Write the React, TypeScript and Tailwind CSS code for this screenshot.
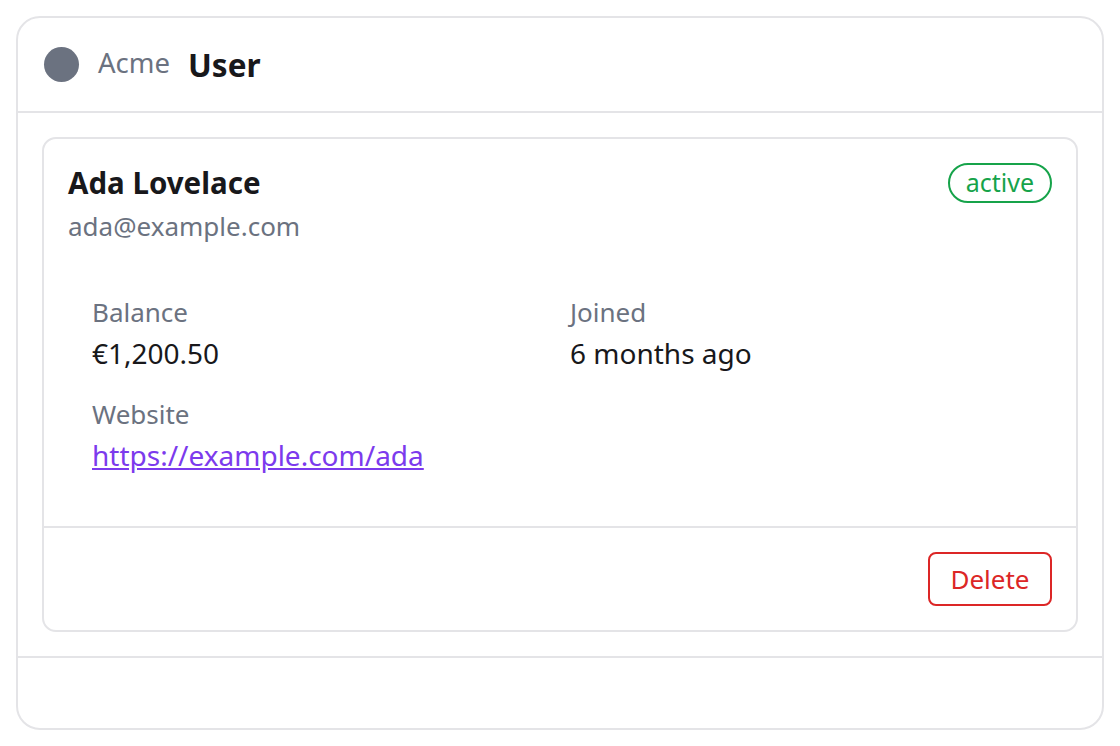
export default function App() {
  return (
    <div className="flex h-screen w-full bg-white p-4 font-['Noto_Sans',sans-serif]">
      <div className="flex flex-1 flex-col rounded-[24px] border-2 border-[#e4e4e7]">
        {/* header */}
        <div className="flex h-[95px] items-center border-b-2 border-[#e4e4e7] px-[26px]">
          <div className="h-[35px] w-[35px] rounded-full bg-[#6b7280]" />
          <span className="ml-[19px] mb-[4px] text-[27.5px] text-[#6b7280]">Acme</span>
          <span className="ml-[18px] text-[31.5px] font-bold text-[#18181b]">User</span>
        </div>

        {/* body */}
        <div className="p-6">
          <div className="rounded-[14px] border-2 border-[#e4e4e7]">
            <div className="px-6 pt-[24px] pb-[52px]">
              <div className="flex items-start justify-between">
                <div>
                  <div className="text-[29.5px] font-bold leading-[40px] text-[#18181b]">Ada Lovelace</div>
                  <div className="mt-[5px] text-[26px] leading-[36px] text-[#6b7280]">ada@example.com</div>
                </div>
                <span className="flex h-[40px] items-center rounded-full border-2 border-[#16a34a] px-[16px] text-[25px] text-[#16a34a]">
                  active
                </span>
              </div>
              <div className="mt-[50px] grid grid-cols-2 gap-x-5 gap-y-[24px] px-6">
                <Field label="Balance">€1,200.50</Field>
                <Field label="Joined">6 months ago</Field>
                <Field label="Website">
                  <a href="#" className="text-[#7c3aed] underline">
                    https://example.com/ada
                  </a>
                </Field>
              </div>
            </div>
            <div className="flex justify-end border-t-2 border-[#e4e4e7] p-6">
              <button className="h-[54px] w-[124px] rounded-[8px] border-2 border-[#dc2626] text-[26px] text-[#dc2626]">
                Delete
              </button>
            </div>
          </div>
        </div>

        {/* footer */}
        <div className="flex-1 border-t-2 border-[#e4e4e7]" />
      </div>
    </div>
  );
}

function Field({ label, children }: { label: string; children: React.ReactNode }) {
  return (
    <div>
      <div className="text-[26px] leading-[36px] text-[#6b7280]">{label}</div>
      <div className="mt-[4px] text-[28px] leading-[38px] text-[#18181b]">{children}</div>
    </div>
  );
}
